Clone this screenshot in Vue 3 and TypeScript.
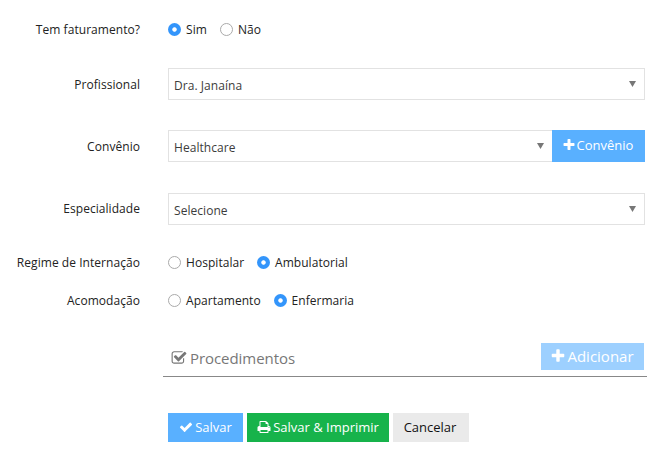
<script setup lang="ts">
import { reactive } from 'vue'

interface Option { value: string; width: number }
interface RadioField { key: string; label: string; options: Option[] }
interface SelectField { key: string; label: string; value: string; action?: string }

const radioTop: RadioField = {
  key: 'faturamento',
  label: 'Tem faturamento?',
  options: [{ value: 'Sim', width: 52 }, { value: 'Não', width: 60 }],
}

const selects: SelectField[] = [
  { key: 'profissional', label: 'Profissional', value: 'Dra. Janaína' },
  { key: 'convenio', label: 'Convênio', value: 'Healthcare', action: 'Convênio' },
  { key: 'especialidade', label: 'Especialidade', value: 'Selecione' },
]

const radioBottom: RadioField[] = [
  {
    key: 'regime',
    label: 'Regime de Internação',
    options: [{ value: 'Hospitalar', width: 89 }, { value: 'Ambulatorial', width: 110 }],
  },
  {
    key: 'acomodacao',
    label: 'Acomodação',
    options: [{ value: 'Apartamento', width: 105.5 }, { value: 'Enfermaria', width: 100 }],
  },
]

const chosen = reactive<Record<string, string>>({
  faturamento: 'Sim',
  regime: 'Ambulatorial',
  acomodacao: 'Enfermaria',
})

const icons = {
  plus: 'M1600 736v192q0 40-28 68t-68 28h-416v416q0 40-28 68t-68 28h-192q-40 0-68-28t-28-68v-416h-416q-40 0-68-28t-28-68v-192q0-40 28-68t68-28h416v-416q0-40 28-68t68-28h192q40 0 68 28t28 68v416h416q40 0 68 28t28 68z',
  check: 'M1671 566q0 40-28 68l-724 724-136 136q-28 28-68 28t-68-28l-136-136-362-362q-28-28-28-68t28-68l136-136q28-28 68-28t68 28l294 295 656-657q28-28 68-28t68 28l136 136q28 28 28 68z',
  print: 'M448 1536h896v-256h-896v256zm0-640h896v-384h-160q-40 0-68-28t-28-68v-160h-640v640zm1152 64q0-26-19-45t-45-19-45 19-19 45 19 45 45 19 45-19 19-45zm128 0v416q0 13-9.5 22.5t-22.5 9.5h-224v160q0 40-28 68t-68 28h-960q-40 0-68-28t-28-68v-160h-224q-13 0-22.5-9.5t-9.5-22.5v-416q0-79 56.5-135.5t135.5-56.5h64v-544q0-40 28-68t68-28h672q40 0 88 20t76 48l152 152q28 28 48 76t20 88v256h64q79 0 135.5 56.5t56.5 135.5z',
  checkSquare: 'M1472 930v318q0 119-84.5 203.5t-203.5 84.5h-832q-119 0-203.5-84.5t-84.5-203.5v-832q0-119 84.5-203.5t203.5-84.5h832q63 0 117 25 15 7 18 23 3 17-9 29l-49 49q-10 10-23 10-3 0-9-2-23-6-45-6h-832q-66 0-113 47t-47 113v832q0 66 47 113t113 47h832q66 0 113-47t47-113v-254q0-13 9-22l64-64q10-10 23-10 6 0 12 3 20 8 20 29zm231-489l-814 814q-24 24-57 24t-57-24l-430-430q-24-24-24-57t24-57l110-110q24-24 57-24t57 24l263 263 647-647q24-24 57-24t57 24l110 110q24 24 24 57t-24 57z',
}
</script>

<template>
  <form class="form" @submit.prevent>
    <div class="row first">
      <span class="label">{{ radioTop.label }}</span>
      <div class="radios">
        <label v-for="o in radioTop.options" :key="o.value" class="radio" :style="{ width: o.width + 'px' }" @click="chosen[radioTop.key] = o.value">
          <span class="dot" :class="{ on: chosen[radioTop.key] === o.value }"></span>{{ o.value }}
        </label>
      </div>
    </div>

    <div class="selects">
      <div v-for="s in selects" :key="s.key" class="row select-row">
        <span class="label">{{ s.label }}</span>
        <div class="field">
          <div class="select" :class="{ joined: s.action }">
            <span>{{ s.value }}</span>
            <svg class="caret" viewBox="0 0 7 6"><path d="M0 0h7L3.5 6z" /></svg>
          </div>
          <button v-if="s.action" type="button" class="btn blue addon">
            <svg class="icon" viewBox="0 0 1792 1792"><path :d="icons.plus" /></svg>{{ s.action }}
          </button>
        </div>
      </div>
    </div>

    <div class="groups">
      <div v-for="r in radioBottom" :key="r.key" class="row group">
        <span class="label">{{ r.label }}</span>
        <div class="radios">
          <label v-for="o in r.options" :key="o.value" class="radio" :style="{ width: o.width + 'px' }" @click="chosen[r.key] = o.value">
            <span class="dot" :class="{ on: chosen[r.key] === o.value }"></span>{{ o.value }}
          </label>
        </div>
      </div>
    </div>

    <div class="section">
      <h2 class="title"><svg class="icon" viewBox="0 0 1792 1792"><path :d="icons.checkSquare" /></svg>Procedimentos</h2>
      <button type="button" class="btn add">
        <svg class="icon" viewBox="0 0 1792 1792"><path :d="icons.plus" /></svg>Adicionar
      </button>
    </div>

    <div class="actions">
      <button class="btn blue save"><svg class="icon" viewBox="0 0 1792 1792"><path :d="icons.check" /></svg>Salvar</button>
      <button class="btn green"><svg class="icon" viewBox="0 0 1792 1792"><path :d="icons.print" /></svg>Salvar &amp; Imprimir</button>
      <button type="button" class="btn gray">Cancelar</button>
    </div>
  </form>
</template>

<style>
body { background: #fff; }
</style>

<style scoped>
.form {
  box-sizing: border-box;
  width: 670px;
  height: 463px;
  overflow: hidden;
  font: 12px/18px "Open Sans", "Noto Sans", sans-serif;
  letter-spacing: 0.05px;
  color: #222;
}
.row {
  display: grid;
  grid-template-columns: 140px 477px;
  column-gap: 28px;
}
.label { text-align: right; white-space: nowrap; }
.first { box-sizing: border-box; padding-top: 21px; height: 68px; }
.radios { display: flex; }
.radio { display: flex; align-items: center; height: 18px; white-space: nowrap; }
.dot {
  box-sizing: border-box;
  flex: none;
  width: 13px;
  height: 13px;
  margin: 0 5px 1px 0;
  border: 1px solid #aaa;
  border-radius: 50%;
  background: #fff;
}
.dot.on { border: 0; background: radial-gradient(circle, #fff 1.8px, #3395fb 2.6px); }
.selects { display: grid; row-gap: 30.4px; }
.select-row { height: 32px; }
.select-row .label { padding-top: 7.5px; }
.field { display: flex; height: 32px; }
.select {
  box-sizing: border-box;
  flex: 1;
  display: flex;
  justify-content: space-between;
  padding: 8px 8px 0 5px;
  border: 1px solid #e2e2e2;
  color: #3c3c3c;
}
.caret { width: 7px; height: 6px; margin-top: 4px; fill: #777; }
.joined { border-right: 0; }
.btn {
  display: flex;
  box-sizing: border-box;
  align-items: center;
  justify-content: center;
  height: 29px;
  padding: 0;
  border: 0;
  color: #fff;
  font: 13px/20px "Open Sans", "Noto Sans", sans-serif;
  letter-spacing: 0;
  white-space: nowrap;
}
.icon { width: 14px; height: 14px; fill: currentColor; flex: none; margin-right: 2px; }
.blue { background: #59b0ff; }
.addon { width: 93px; height: 32px; padding: 0 2px 2px 0; }
.addon .icon { margin-right: 1px; }
.groups { display: grid; row-gap: 20px; padding-top: 29.2px; }
.group { height: 18px; }
.section {
  box-sizing: border-box;
  display: flex;
  justify-content: space-between;
  width: 484px;
  height: 34px;
  margin: 33px 0 0 163px;
  padding: 0 3px 0 8px;
  border-bottom: 1px solid #888;
}
.title {
  display: flex;
  align-items: center;
  height: 30px;
  margin: 0;
  color: #777;
  font-size: 15px;
  font-weight: 400;
  letter-spacing: -0.06px;
}
.title .icon { width: 16px; height: 16px; margin-right: 3px; }
.add { width: 103px; height: 27px; padding-right: 1px; background: #9dd0ff; font-size: 15px; }
.add .icon { width: 16px; height: 16px; margin-right: 1px; }
.actions { display: flex; gap: 4px; padding: 36px 0 0 168px; }
.save { width: 75px; }
.green { width: 142px; background: #17b34b; }
.gray { width: 76px; padding-right: 2px; background: #eaeaea; color: #111; }
</style>
